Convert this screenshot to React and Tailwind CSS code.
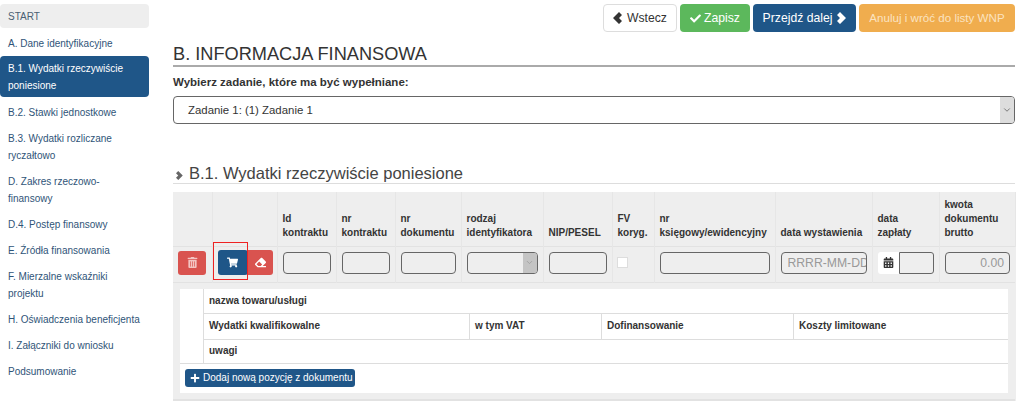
import React from 'react';
import { FaCheck, FaTrashAlt, FaShoppingCart, FaEraser, FaCalendarAlt, FaPlus } from 'react-icons/fa';
import { LuChevronDown } from 'react-icons/lu';

const navItems = [
    { label: 'A. Dane identyfikacyjne' },
    { label: 'B.1. Wydatki rzeczywiście poniesione', active: true },
    { label: 'B.2. Stawki jednostkowe' },
    { label: 'B.3. Wydatki rozliczane ryczałtowo' },
    { label: 'D. Zakres rzeczowo-finansowy' },
    { label: 'D.4. Postęp finansowy' },
    { label: 'E. Źródła finansowania' },
    { label: 'F. Mierzalne wskaźniki projektu' },
    { label: 'H. Oświadczenia beneficjenta' },
    { label: 'I. Załączniki do wniosku' },
    { label: 'Podsumowanie' },
];

const columns = [
    { w: 'w-[39px]', label: '' },
    { w: 'w-[65px]', label: '' },
    { w: 'w-[59px]', label: 'Id\nkontraktu' },
    { w: 'w-[59px]', label: 'nr\nkontraktu' },
    { w: 'w-[66px]', label: 'nr\ndokumentu' },
    { w: 'w-[82px]', label: 'rodzaj\nidentyfikatora' },
    { w: 'w-[69px]', label: 'NIP/PESEL' },
    { w: 'w-[42px]', label: 'FV\nkoryg.' },
    { w: 'w-[121px]', label: 'nr\nksięgowy/ewidencyjny' },
    { w: 'w-[97px]', label: 'data wystawienia' },
    { w: 'w-[67px]', label: 'data\nzapłaty' },
    { w: 'w-[76px]', label: 'kwota\ndokumentu\nbrutto' },
];

const inputClass = 'h-[22px] w-full rounded-[4px] border border-[#666] bg-[#eee]';

// glyphicon style chevron, the icon packs only have thinner ones
function Chevron({ left = false, className = '' }) {
    return (
        <svg width="10" height="12" viewBox="0 0 10 12" className={className} fill="currentColor">
            <polygon points={left ? '6,0 9,3 6,6 9,9 6,12 0,6' : '4,0 10,6 4,12 1,9 4,6 1,3'} />
        </svg>
    );
}

function Cell({ children, className = '' }) {
    return <td className={`border-r border-[#e6e6e6] px-[5px] pb-[3px] align-middle ${className}`}>{children}</td>;
}

export default function App() {
    return (
        <div className="flex w-[1024px] h-[401px] overflow-hidden bg-white font-['Liberation_Sans',Arial,sans-serif] text-[#333]">
            <nav className="w-[149px] shrink-0 pt-[4px] text-[10px] leading-[17px] text-[#2f5478]">
                <div className="flex h-[24px] items-center rounded-[4px] bg-[#eee] px-[8px] mb-[2px] text-[#4a5f73]">START</div>
                {navItems.map(item => (
                    <div key={item.label} className={item.active ? 'rounded-[4px] bg-[#1f5688] text-white px-[8px] pt-[4px] pb-[3px] mb-[2px]' : 'px-[8px] pt-[5px] pb-[4px]'}>
                        {item.label}
                    </div>
                ))}
            </nav>

            <main className="ml-[24px] w-[842px] shrink-0">
                <div className="flex justify-end gap-[3px] pt-[4px] text-[12.2px] h-[32px]">
                    <button className="flex h-[28px] w-[74px] items-center justify-center gap-[4px] rounded-[4px] border border-[#ddd] bg-white"><Chevron left />Wstecz</button>
                    <button className="flex h-[28px] w-[70px] items-center justify-center gap-[3px] rounded-[4px] bg-[#5cb85c] text-white"><FaCheck size={11} />Zapisz</button>
                    <button className="flex h-[28px] w-[103px] items-center justify-center gap-[4px] rounded-[4px] bg-[#1f5688] text-white">Przejdź dalej<Chevron /></button>
                    <button className="flex h-[28px] w-[156px] items-center justify-center rounded-[4px] bg-[#f0ad4e] text-[11.6px] text-[#fbe3c0]">Anuluj i wróć do listy WNP</button>
                </div>

                <h1 className="mt-[11px] border-b-2 border-[#aaa] text-[18.2px] leading-[22px] h-[22px] box-content">B. INFORMACJA FINANSOWA</h1>

                <label className="mt-[8px] block text-[11.5px] leading-[15px] font-bold">Wybierz zadanie, które ma być wypełniane:</label>
                <div className="mt-[6px] flex h-[28px] items-center overflow-hidden rounded-[4px] border border-[#666] bg-white text-[11.4px]">
                    <span className="flex-1 pl-[14px] pt-[1px]">Zadanie 1: (1) Zadanie 1</span>
                    <span className="flex h-full w-[14px] items-center justify-center bg-[#ddd] text-[#666]"><LuChevronDown size={10} /></span>
                </div>

                <h2 className="mt-[40px] flex items-center gap-[6px] border-b border-[#ddd] text-[16.5px] leading-[19px] h-[20px] text-[#444]">
                    <Chevron className="mt-[4px] ml-[2px] h-[9px] w-[8px] text-[#666]" />
                    B.1. Wydatki rzeczywiście poniesione
                </h2>

                <table className="mt-[8px] w-[842px] table-fixed border-collapse bg-[#eee] text-[10px] leading-[14px]">
                    <colgroup>{columns.map((c, i) => <col key={i} className={c.w} />)}</colgroup>
                    <tbody>
                        <tr className="h-[54px] border-b border-[#e2e2e2] font-bold">
                            {columns.map((c, i) => <td key={i} className="whitespace-pre-line border-r border-[#e6e6e6] pl-[5px] pb-[6px] align-bottom">{c.label}</td>)}
                        </tr>
                        <tr className="h-[36px] border-b border-[#e2e2e2]">
                            <Cell>
                                <span className="flex h-[24px] w-[28px] items-center justify-center rounded-[3px] bg-[#d9534f] text-[#f3c4c2]"><FaTrashAlt size={11} /></span>
                            </Cell>
                            <Cell className="!px-0">
                                <div className="relative flex pl-[5px]">
                                    <span className="flex h-[25px] w-[30px] items-center justify-center rounded-[3px] bg-[#1f5688] text-white"><FaShoppingCart size={11} /></span>
                                    <span className="flex h-[25px] w-[25px] items-center justify-center rounded-r-[3px] bg-[#d9534f] text-white"><FaEraser size={11} /></span>
                                    <span className="absolute left-0 top-[-8px] h-[38px] w-[35px] border border-[#ee2222]"></span>
                                </div>
                            </Cell>
                            <Cell><div className={inputClass}></div></Cell>
                            <Cell><div className={inputClass}></div></Cell>
                            <Cell><div className={inputClass}></div></Cell>
                            <Cell>
                                <div className={`${inputClass} flex justify-end overflow-hidden`}>
                                    <span className="flex w-[14px] items-center justify-center bg-[#c4c4c4] text-[#999]"><LuChevronDown size={9} /></span>
                                </div>
                            </Cell>
                            <Cell><div className={inputClass}></div></Cell>
                            <Cell><div className="ml-[-1px] h-[11px] w-[11px] border border-[#ddd] bg-white"></div></Cell>
                            <Cell><div className={inputClass}></div></Cell>
                            <Cell><div className={`${inputClass} overflow-hidden whitespace-nowrap pl-[6px] text-[12.2px] leading-[20px] text-[#999]`}>RRRR-MM-DD</div></Cell>
                            <Cell>
                                <div className="flex h-[22px]">
                                    <span className="flex w-[21px] shrink-0 items-center justify-center rounded-l-[3px] bg-white text-[#333]"><FaCalendarAlt size={11} /></span>
                                    <div className="flex-1 rounded-r-[3px] border border-[#666] bg-[#eee]"></div>
                                </div>
                            </Cell>
                            <Cell className="border-r-0"><div className={`${inputClass} px-[5px] text-right text-[12.2px] leading-[20px] text-[#999]`}>0.00</div></Cell>
                        </tr>
                        <tr className="h-[116px] border-b-2 border-[#e2e2e2]">
                            <td colSpan={12} className="px-[7px] pt-[6px] pb-[6px] align-top">
                                <div className="bg-white font-bold">
                                    <div className="flex border-b border-[#ddd]">
                                        <div className="w-[24px] shrink-0 border-r border-[#ddd]"></div>
                                        <div className="flex-1">
                                            <div className="flex h-[25px] items-center border-b border-[#ddd] pl-[5px]">nazwa towaru/usługi</div>
                                            <div className="flex h-[26px] border-b border-[#ddd]">
                                                <div className="flex w-[266px] items-center border-r border-[#ddd] pl-[5px]">Wydatki kwalifikowalne</div>
                                                <div className="flex w-[132px] items-center border-r border-[#ddd] pl-[5px]">w tym VAT</div>
                                                <div className="flex w-[192px] items-center border-r border-[#ddd] pl-[5px]">Dofinansowanie</div>
                                                <div className="flex flex-1 items-center pl-[5px]">Koszty limitowane</div>
                                            </div>
                                            <div className="flex h-[23px] items-center pl-[5px]">uwagi</div>
                                        </div>
                                    </div>
                                    <div className="flex h-[29px] items-center pl-[5px] font-normal">
                                        <span className="flex h-[18px] w-[170px] items-center gap-[3px] rounded-[3px] bg-[#1f5688] pl-[5px] text-white"><FaPlus size={10} />Dodaj nową pozycję z dokumentu</span>
                                    </div>
                                </div>
                            </td>
                        </tr>
                    </tbody>
                </table>
            </main>
        </div>
    );
}
